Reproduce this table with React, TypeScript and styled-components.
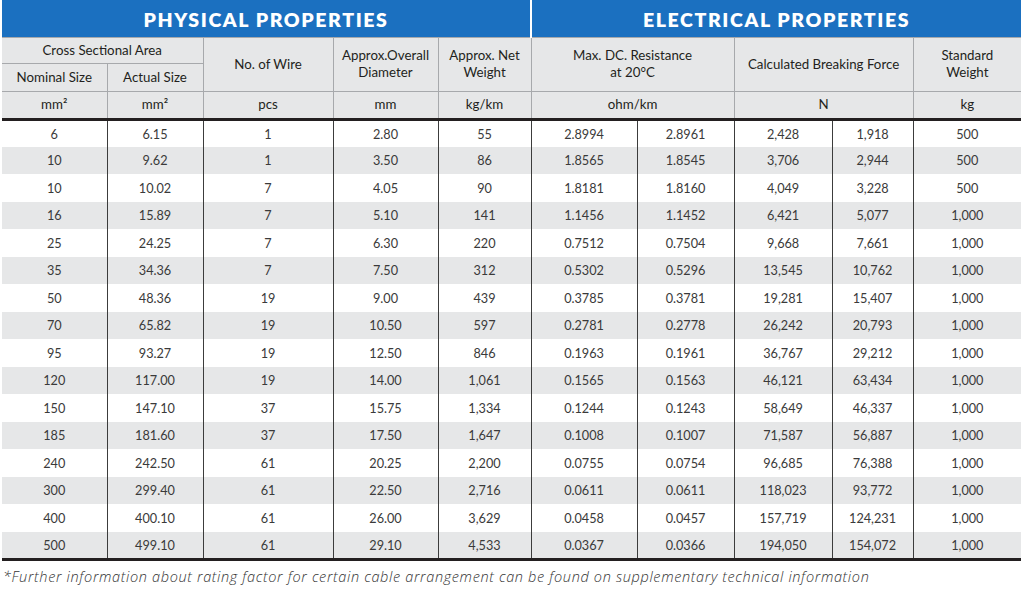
import styled, { createGlobalStyle } from 'styled-components';

const GlobalStyle = createGlobalStyle`
  html, body {
    margin: 0;
    padding: 0;
    background: #ffffff;
  }
  body {
    font-family: Lato, 'Open Sans', sans-serif;
    color: #231f20;
  }
`;

const rows: string[][] = [
  ['6', '6.15', '1', '2.80', '55', '2.8994', '2.8961', '2,428', '1,918', '500'],
  ['10', '9.62', '1', '3.50', '86', '1.8565', '1.8545', '3,706', '2,944', '500'],
  ['10', '10.02', '7', '4.05', '90', '1.8181', '1.8160', '4,049', '3,228', '500'],
  ['16', '15.89', '7', '5.10', '141', '1.1456', '1.1452', '6,421', '5,077', '1,000'],
  ['25', '24.25', '7', '6.30', '220', '0.7512', '0.7504', '9,668', '7,661', '1,000'],
  ['35', '34.36', '7', '7.50', '312', '0.5302', '0.5296', '13,545', '10,762', '1,000'],
  ['50', '48.36', '19', '9.00', '439', '0.3785', '0.3781', '19,281', '15,407', '1,000'],
  ['70', '65.82', '19', '10.50', '597', '0.2781', '0.2778', '26,242', '20,793', '1,000'],
  ['95', '93.27', '19', '12.50', '846', '0.1963', '0.1961', '36,767', '29,212', '1,000'],
  ['120', '117.00', '19', '14.00', '1,061', '0.1565', '0.1563', '46,121', '63,434', '1,000'],
  ['150', '147.10', '37', '15.75', '1,334', '0.1244', '0.1243', '58,649', '46,337', '1,000'],
  ['185', '181.60', '37', '17.50', '1,647', '0.1008', '0.1007', '71,587', '56,887', '1,000'],
  ['240', '242.50', '61', '20.25', '2,200', '0.0755', '0.0754', '96,685', '76,388', '1,000'],
  ['300', '299.40', '61', '22.50', '2,716', '0.0611', '0.0611', '118,023', '93,772', '1,000'],
  ['400', '400.10', '61', '26.00', '3,629', '0.0458', '0.0457', '157,719', '124,231', '1,000'],
  ['500', '499.10', '61', '29.10', '4,533', '0.0367', '0.0366', '194,050', '154,072', '1,000'],
];

const colWidths = [105, 96, 130, 105, 93, 106, 97, 98, 81, 108];

const Page = styled.div`
  padding: 0 0 0 2px;
  width: 1019px;
`;

const Table = styled.table`
  width: 1019px;
  table-layout: fixed;
  border-collapse: collapse;
  border-spacing: 0;
`;

const SectionRow = styled.tr`
  height: 37px;
`;

const SectionTitle = styled.th<{ $split?: boolean }>`
  background: #1b70c0;
  color: #ffffff;
  font-family: Lato, sans-serif;
  font-weight: 800;
  font-size: 19.5px;
  letter-spacing: 1.6px;
  padding: 2px 0 0;
  text-align: center;
  border-left: ${(p) => (p.$split ? '2px solid #ffffff' : '0')};
`;

const HeadRow = styled.tr<{ $h: number }>`
  height: ${(p) => p.$h}px;
`;

const HeadCell = styled.th<{ $first?: boolean }>`
  background: #e6e7e8;
  color: #231f20;
  font-weight: 400;
  font-size: 13.3px;
  line-height: 17px;
  text-align: center;
  vertical-align: middle;
  padding: 0 2px;
  border-top: 1px solid #a7a9ac;
  border-left: ${(p) => (p.$first ? '0' : '1px solid #a7a9ac')};
`;

const BodyRow = styled.tr<{ $even: boolean }>`
  height: 27.5px;
  background: ${(p) => (p.$even ? '#e6e7e8' : '#ffffff')};
`;

const Cell = styled.td<{ $first: boolean; $top: boolean; $bottom: boolean }>`
  color: #3a3a3a;
  font-size: 12.7px;
  text-align: center;
  vertical-align: middle;
  padding: 0;
  border-left: ${(p) => (p.$first ? '0' : '1px solid #3c3c3c')};
  border-top: ${(p) => (p.$top ? '3px solid #231f20' : '0')};
  border-bottom: ${(p) => (p.$bottom ? '3px solid #231f20' : '0')};
`;

const Note = styled.p`
  margin: 6px 0 0 1px;
  font-family: 'Open Sans', sans-serif;
  font-style: italic;
  font-weight: 300;
  font-size: 14.5px;
  letter-spacing: 0.65px;
  color: #333333;
`;

export default function App() {
  return (
    <>
      <GlobalStyle />
      <Page>
        <Table>
          <colgroup>
            {colWidths.map((w, i) => (
              <col key={i} style={{ width: w }} />
            ))}
          </colgroup>
          <thead>
            <SectionRow>
              <SectionTitle colSpan={5}>PHYSICAL PROPERTIES</SectionTitle>
              <SectionTitle colSpan={5} $split>
                ELECTRICAL PROPERTIES
              </SectionTitle>
            </SectionRow>
            <HeadRow $h={26}>
              <HeadCell colSpan={2} $first>
                Cross Sectional Area
              </HeadCell>
              <HeadCell rowSpan={2}>No. of Wire</HeadCell>
              <HeadCell rowSpan={2}>
                Approx.Overall
                <br />
                Diameter
              </HeadCell>
              <HeadCell rowSpan={2}>
                Approx. Net
                <br />
                Weight
              </HeadCell>
              <HeadCell rowSpan={2} colSpan={2}>
                Max. DC. Resistance
                <br />
                at 20°C
              </HeadCell>
              <HeadCell rowSpan={2} colSpan={2}>
                Calculated Breaking Force
              </HeadCell>
              <HeadCell rowSpan={2}>
                Standard
                <br />
                Weight
              </HeadCell>
            </HeadRow>
            <HeadRow $h={28}>
              <HeadCell $first>Nominal Size</HeadCell>
              <HeadCell>Actual Size</HeadCell>
            </HeadRow>
            <HeadRow $h={28}>
              <HeadCell $first>mm²</HeadCell>
              <HeadCell>mm²</HeadCell>
              <HeadCell>pcs</HeadCell>
              <HeadCell>mm</HeadCell>
              <HeadCell>kg/km</HeadCell>
              <HeadCell colSpan={2}>ohm/km</HeadCell>
              <HeadCell colSpan={2}>N</HeadCell>
              <HeadCell>kg</HeadCell>
            </HeadRow>
          </thead>
          <tbody>
            {rows.map((r, ri) => (
              <BodyRow key={ri} $even={ri % 2 === 1}>
                {r.map((v, ci) => (
                  <Cell
                    key={ci}
                    $first={ci === 0}
                    $top={ri === 0}
                    $bottom={ri === rows.length - 1}
                  >
                    {v}
                  </Cell>
                ))}
              </BodyRow>
            ))}
          </tbody>
        </Table>
        <Note>
          *Further information about rating factor for certain cable arrangement can be found on
          supplementary technical information
        </Note>
      </Page>
    </>
  );
}
